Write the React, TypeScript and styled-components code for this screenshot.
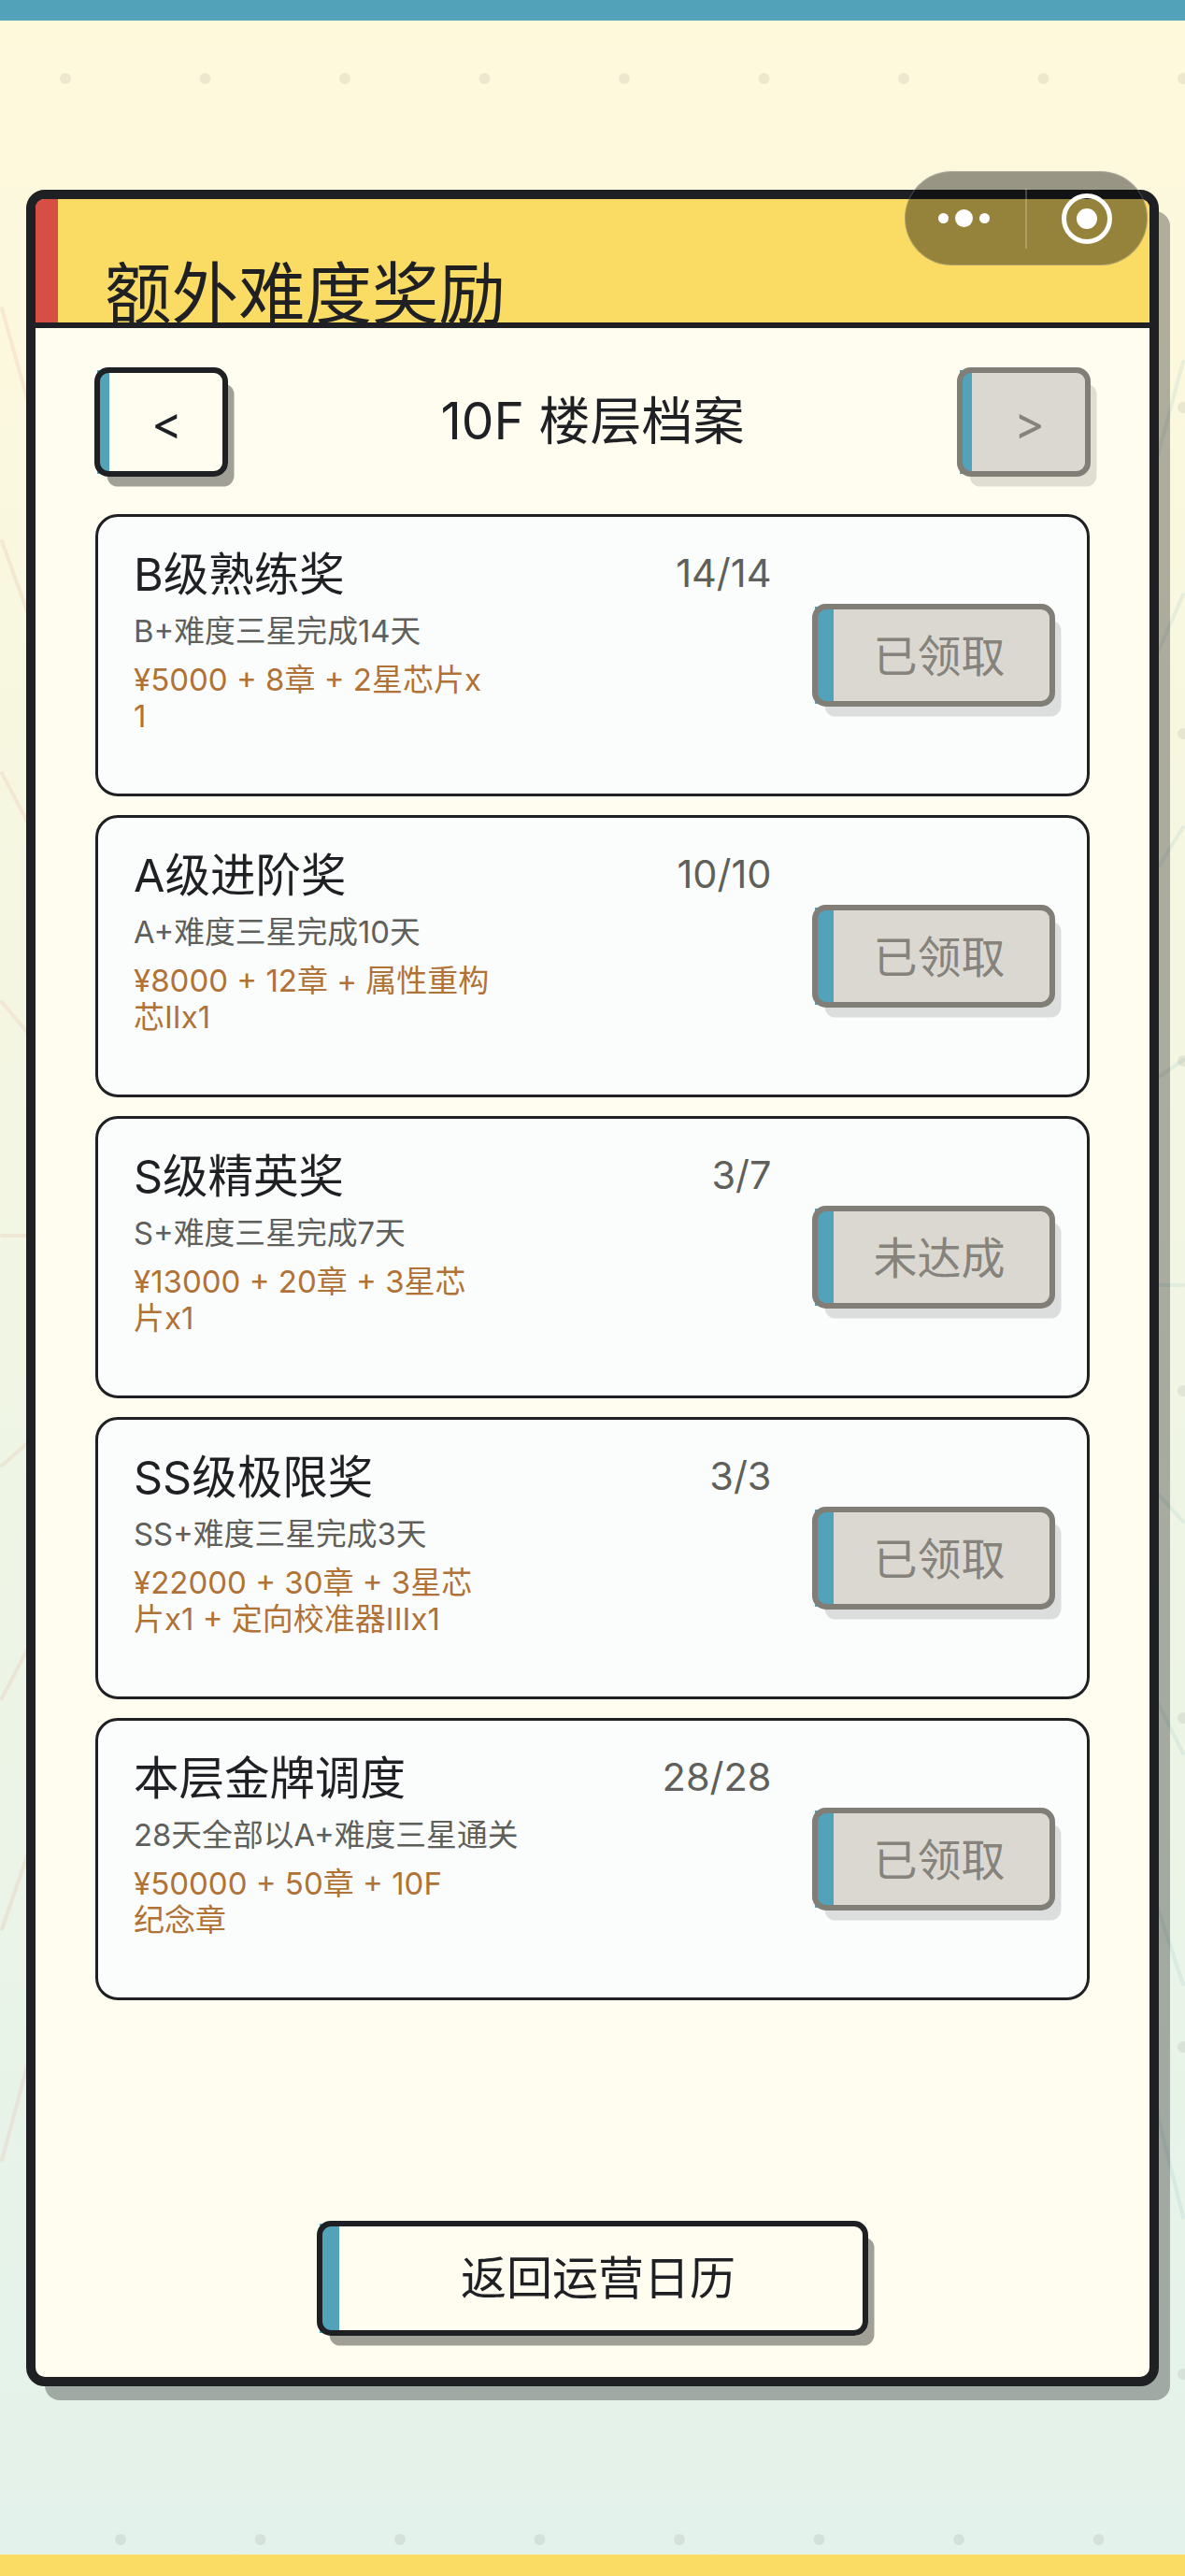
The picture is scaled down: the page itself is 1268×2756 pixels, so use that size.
import styled, { createGlobalStyle } from 'styled-components';

const INK = '#1f2023';
const TEAL = '#52a2ba';
const YELLOW = '#fadb63';
const RED = '#d64f45';
const FONT = 'Inter, "Noto Sans CJK SC", sans-serif';

const GlobalStyle = createGlobalStyle`
  html, body {
    margin: 0;
    padding: 0;
  }
  body {
    font-family: ${FONT};
    color: ${INK};
  }
`;

const Page = styled.div`
  position: relative;
  width: 1268px;
  height: 2756px;
  display: flex;
  flex-direction: column;
  overflow: hidden;
  background: linear-gradient(180deg, #fff9dc 0%, #e3f2eb 100%);
`;

const Backdrop = styled.svg`
  position: absolute;
  inset: 0;
`;

const TopBar = styled.div`
  height: 22px;
  background: ${TEAL};
  flex-shrink: 0;
`;

const BottomBar = styled.div`
  height: 23px;
  margin-top: auto;
  background: ${YELLOW};
  flex-shrink: 0;
`;

const Main = styled.main`
  position: relative;
  padding: 181px 28px 0;
`;

const Panel = styled.section`
  height: 2350px;
  box-sizing: border-box;
  display: flex;
  flex-direction: column;
  border: 10px solid ${INK};
  border-radius: 20px;
  background: #fffdf0;
  box-shadow: 16px 19px 0 -4px rgba(0, 0, 0, 0.3);
`;

const Header = styled.header`
  height: 138px;
  box-sizing: border-box;
  flex-shrink: 0;
  padding: 59px 0 0 74px;
  overflow: hidden;
  background: linear-gradient(90deg, ${RED} 24px, ${YELLOW} 24px);
  border-bottom: 6px solid ${INK};
  border-radius: 9px 9px 0 0;
`;

const Title = styled.h1`
  margin: 0;
  font-size: 71.5px;
  font-weight: 400;
  line-height: 84px;
  white-space: nowrap;
`;

const Body = styled.div`
  flex: 1;
  display: flex;
  flex-direction: column;
  padding: 42px 63px 44px 63px;
`;

const NavRow = styled.div`
  display: flex;
  align-items: center;
  justify-content: space-between;
  margin-bottom: 40px;
`;

const FloorTitle = styled.h2`
  margin: 0 0 3px;
  font-size: 55px;
  font-weight: 400;
  line-height: 64px;
`;

// 左侧色条压在圆角下面，四个角会露出一点
const Chunky = styled.button<{ $muted?: boolean; $strip: number; $w: number; $h: number; $size: number }>`
  position: relative;
  flex-shrink: 0;
  width: ${(p) => p.$w}px;
  height: ${(p) => p.$h}px;
  padding: 0 0 0 12px;
  border: 0;
  border-radius: 15px;
  font-family: ${FONT};
  font-size: ${(p) => p.$size}px;
  line-height: 1;
  color: ${(p) => (p.$muted ? '#85837c' : INK)};
  background: ${(p) => (p.$muted ? '#dbd8d1' : '#fffdf0')};
  box-shadow: 10px 14px 0 -3.5px ${(p) => (p.$muted ? 'rgba(0, 0, 0, 0.12)' : 'rgba(0, 0, 0, 0.37)')};

  &::before {
    content: '';
    position: absolute;
    left: 3px;
    top: 3px;
    bottom: 3px;
    width: ${(p) => p.$strip - 3}px;
    background: ${TEAL};
  }

  &::after {
    content: '';
    position: absolute;
    inset: 0;
    border: 6.5px solid ${(p) => (p.$muted ? '#807e77' : INK)};
    border-radius: 15px;
  }
`;

const CardList = styled.div`
  display: flex;
  flex-direction: column;
  gap: 20px;
  margin: 0 1px;
`;

const Card = styled.article`
  height: 302px;
  box-sizing: border-box;
  display: flex;
  align-items: center;
  gap: 45px;
  padding: 0 34px 0 38px;
  border: 3.5px solid ${INK};
  border-radius: 24px;
  background: #fbfdfc;
`;

const CardText = styled.div`
  flex: 1;
  align-self: flex-start;
  padding-top: 33px;
`;

const CardHead = styled.div`
  display: flex;
  align-items: center;
  justify-content: space-between;
`;

const CardTitle = styled.h3`
  margin: 0;
  font-size: 48.5px;
  font-weight: 400;
  line-height: 58px;
`;

const Progress = styled.span`
  margin: 0 -1.5px 3px 0;
  font-size: 41.5px;
  line-height: 55px;
  color: #5f5f5b;
`;

const Desc = styled.p`
  margin: 11px 0 0;
  font-size: 32.8px;
  line-height: 40px;
  color: #5f5f5b;
`;

const Reward = styled.p`
  margin: 13px 0 0;
  font-size: 33px;
  line-height: 38.5px;
  color: #b07236;
  white-space: pre-line;
`;

const BackSlot = styled.div`
  margin-top: auto;
  display: flex;
  justify-content: center;
`;

const Capsule = styled.div`
  position: absolute;
  left: 968px;
  top: 183px;
  width: 260px;
  height: 101px;
  box-sizing: border-box;
  display: flex;
  align-items: center;
  border-radius: 51px;
  background: rgba(0, 0, 0, 0.4);
  border: 1.5px solid rgba(255, 255, 255, 0.22);
`;

const MoreSlot = styled.div`
  width: 128px;
  height: 100%;
  display: flex;
  align-items: center;
  justify-content: center;
  gap: 7px;
  padding-right: 4px;
  box-sizing: border-box;
`;

const MoreDot = styled.i<{ $big?: boolean }>`
  width: ${(p) => (p.$big ? 19 : 11)}px;
  height: ${(p) => (p.$big ? 19 : 11)}px;
  border-radius: 50%;
  background: #fff;
`;

const CapsuleLine = styled.div`
  width: 2px;
  height: 64px;
  background: rgba(255, 255, 255, 0.22);
`;

const CloseSlot = styled.div`
  flex: 1;
  display: flex;
  align-items: center;
  justify-content: center;
`;

const rewards = [
  { title: 'B级熟练奖', progress: '14/14', desc: 'B+难度三星完成14天', reward: '¥5000 + 8章 + 2星芯片x\n1', state: '已领取' },
  { title: 'A级进阶奖', progress: '10/10', desc: 'A+难度三星完成10天', reward: '¥8000 + 12章 + 属性重构\n芯IIx1', state: '已领取' },
  { title: 'S级精英奖', progress: '3/7', desc: 'S+难度三星完成7天', reward: '¥13000 + 20章 + 3星芯\n片x1', state: '未达成' },
  { title: 'SS级极限奖', progress: '3/3', desc: 'SS+难度三星完成3天', reward: '¥22000 + 30章 + 3星芯\n片x1 + 定向校准器IIIx1', state: '已领取' },
  { title: '本层金牌调度', progress: '28/28', desc: '28天全部以A+难度三星通关', reward: '¥50000 + 50章 + 10F\n纪念章', state: '已领取' },
];

// 背景放射线：[外端 y, 斜率]
const leftRays = [[330, 3.57], [579, 2.77], [827, 1.92], [1072, 1.19], [1322, 0], [1568, -0.88], [1817, -1.92], [2064, -2.9], [2311, -3.7]];
const rightRays = [[387, 3.7], [636, 2.3], [885, 1.6], [1134, 0.7], [1375, 0], [1628, -1.1], [1876, -2], [2123, -3], [2372, -4]];
const edgeDots = [436, 785, 1135, 1488, 1838, 2190, 2540];

const App = () => {
  return (
    <Page>
      <GlobalStyle />
      <Backdrop width="1268" height="2756" viewBox="0 0 1268 2756">
        {leftRays.map(([y, k]) => (
          <line key={y} x1="2" y1={y} x2="62" y2={y + k * 60} stroke="#d6604a" strokeOpacity="0.1" strokeWidth="4" strokeLinecap="round" />
        ))}
        {rightRays.map(([y, k]) => (
          <line key={y} x1="1266" y1={y} x2="1206" y2={y + k * 60} stroke={TEAL} strokeOpacity="0.11" strokeWidth="4" strokeLinecap="round" />
        ))}
        {Array.from({ length: 9 }, (_, i) => (
          <circle key={i} cx={70 + i * 149.5} cy="84" r="6" fill="#000" fillOpacity="0.065" />
        ))}
        {Array.from({ length: 8 }, (_, i) => (
          <circle key={i} cx={129 + i * 149.5} cy="2717" r="6" fill="#000" fillOpacity="0.065" />
        ))}
        {edgeDots.map((y) => (
          <circle key={y} cx="1266" cy={y} r="6" fill="#000" fillOpacity="0.065" />
        ))}
      </Backdrop>

      <TopBar />

      <Main>
        <Panel>
          <Header>
            <Title>额外难度奖励</Title>
          </Header>
          <Body>
            <NavRow>
              <Chunky $strip={16} $w={143} $h={117} $size={50}>&lt;</Chunky>
              <FloorTitle>10F 楼层档案</FloorTitle>
              <Chunky $muted $strip={16} $w={143} $h={117} $size={50}>&gt;</Chunky>
            </NavRow>

            <CardList>
              {rewards.map((item) => (
                <Card key={item.title}>
                  <CardText>
                    <CardHead>
                      <CardTitle>{item.title}</CardTitle>
                      <Progress>{item.progress}</Progress>
                    </CardHead>
                    <Desc>{item.desc}</Desc>
                    <Reward>{item.reward}</Reward>
                  </CardText>
                  <Chunky $muted $strip={23} $w={260} $h={110} $size={47}>{item.state}</Chunky>
                </Card>
              ))}
            </CardList>

            <BackSlot>
              <Chunky $strip={24} $w={590} $h={123} $size={49}>返回运营日历</Chunky>
            </BackSlot>
          </Body>
        </Panel>
      </Main>

      <BottomBar />

      <Capsule>
        <MoreSlot>
          <MoreDot />
          <MoreDot $big />
          <MoreDot />
        </MoreSlot>
        <CapsuleLine />
        <CloseSlot>
          <svg width="54" height="54" viewBox="0 0 54 54">
            <circle cx="27" cy="27" r="24.5" fill="none" stroke="#fff" strokeWidth="5" />
            <circle cx="27" cy="27" r="11" fill="#fff" />
          </svg>
        </CloseSlot>
      </Capsule>
    </Page>
  );
};

export default App;
